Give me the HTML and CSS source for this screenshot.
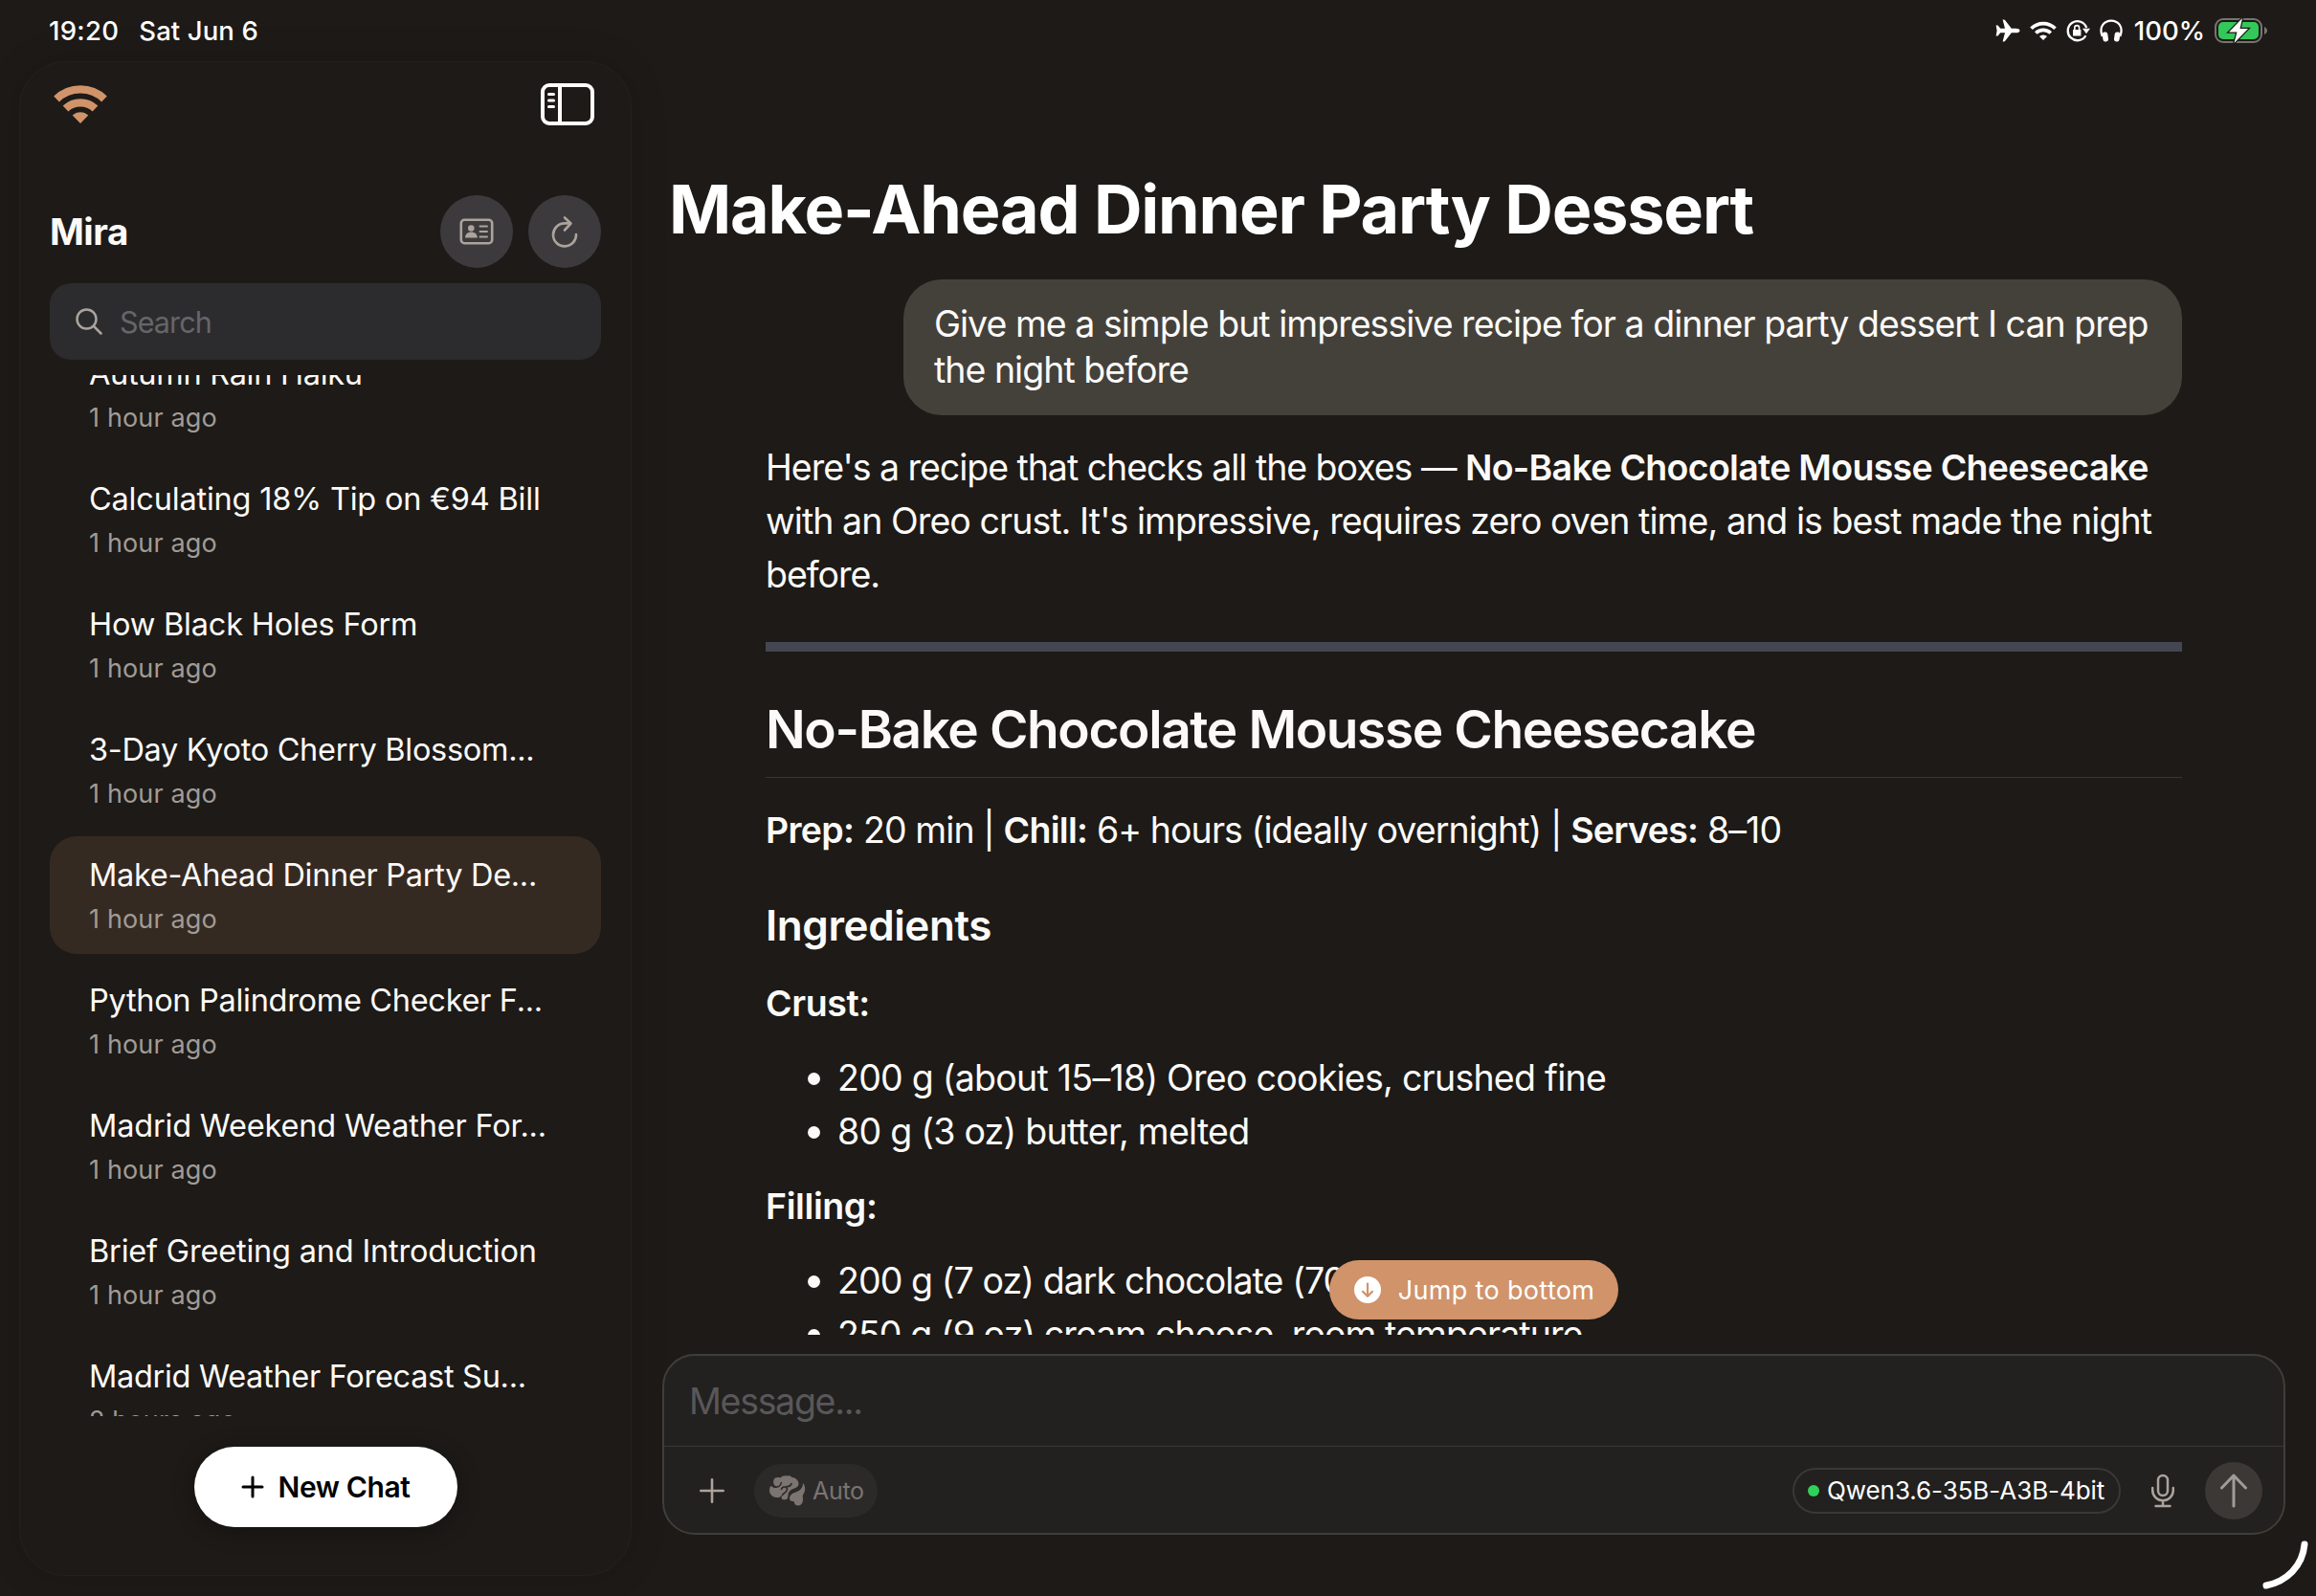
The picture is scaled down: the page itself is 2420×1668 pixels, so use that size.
FILE: index.html
```html
<!DOCTYPE html>
<html lang="en">
<head>
<meta charset="utf-8">
<title>Mira</title>
<link rel="stylesheet" href="styles.css">
</head>
<body>
<div class="screen">
  <header class="status">
    <span class="time">19:20</span><span class="date">Sat Jun 6</span>
    <div class="indicators">
      <svg width="26" height="24" viewBox="0 0 26 24"><path fill="#fff" d="M25.500 12c0-1.500-1.800-2.300-4-2.300h-4.700L10.200 1.200C9.700.5 9 .3 7.600.6L10 9.700H5.200L2.600 6.600H.6L1.600 12 .6 17.400h2l2.600-3.100H10L7.600 23.400c1.400.3 2.100.1 2.600-.6l6.600-8.500h4.700c2.200 0 4-.8 4-2.300z"/></svg>
      <svg width="28" height="20" viewBox="0 0 56 40"><g fill="none" stroke="#fff" stroke-width="7.500"><path d="M3 15.500a36 36 0 0 1 50 0"/><path d="M12.500 25a22.500 22.500 0 0 1 31 0"/></g><path fill="#fff" d="M28 40l-8-8a11.500 11.500 0 0 1 16 0z"/></svg>
      <svg width="25" height="24" viewBox="0 0 25 24"><path fill="none" stroke="#fff" stroke-width="2.300" d="M20.400 17.200A10 10 0 1 1 21.200 9"/><path fill="#fff" d="M17 9.800h8l-4 5.400zM7 11h8.400v6.400H7z"/><path fill="none" stroke="#fff" stroke-width="1.600" d="M8.800 11V9a2.400 2.400 0 0 1 4.800 0v2"/></svg>
      <svg width="24" height="24" viewBox="0 0 24 24"><path fill="none" stroke="#fff" stroke-width="2.300" d="M2.800 18c-4.500-11 3-16.400 9.200-16.400S25.700 7 21.200 18"/><rect x="3" y="13.500" width="5.600" height="10" rx="2.600" fill="#fff" transform="rotate(-8 6 18)"/><rect x="15.400" y="13.500" width="5.600" height="10" rx="2.600" fill="#fff" transform="rotate(8 18 18)"/></svg>
      <span class="percent">100%</span>
      <svg width="56" height="28" viewBox="0 0 56 28"><rect x="1" y="2" width="48" height="24" rx="8" fill="none" stroke="#777572" stroke-width="2"/><rect x="4" y="5" width="42" height="18" rx="5" fill="#34c759"/><path fill="#777572" d="M52 10c4 1.500 4 6.500 0 8z"/><path fill="#fff" stroke="#1d1a17" stroke-width="2.500" paint-order="stroke" d="M29 1L15 15.500h8.500L20.500 27 35 12h-8.500z"/></svg>
    </div>
  </header>

  <div class="body">
    <aside class="sidebar">
      <div class="toolbar">
        <svg width="56" height="41" viewBox="0 0 56 41"><g fill="none" stroke="#d0936a" stroke-width="8.200"><path d="M3 15.500a36 36 0 0 1 50 0"/><path d="M12.500 25.500a22.500 22.500 0 0 1 31 0"/></g><path fill="#d0936a" d="M28 41l-8.300-8.500a12 12 0 0 1 16.600 0z"/></svg>
        <svg width="58" height="46" viewBox="0 0 58 46"><g fill="none" stroke="#fff" stroke-width="4"><rect x="3" y="3" width="52" height="40" rx="7"/><path d="M21 3v40"/></g><path stroke="#fff" stroke-width="3" stroke-linecap="round" d="M9.500 12.500h5M9.500 19h5M9.500 25.500h5"/></svg>
      </div>
      <div class="brand">
        <h1 class="brand-name">Mira</h1>
        <button class="round"><svg width="36" height="28" viewBox="0 0 36 28"><rect x="1.800" y="1.800" width="32.400" height="24.400" rx="3.500" fill="none" stroke="#aca39c" stroke-width="2.600"/><circle cx="12.300" cy="10.500" r="3.300" fill="#aca39c"/><path fill="#aca39c" d="M6 20.500c0-8 12.800-8 12.800 0z"/><path stroke="#aca39c" stroke-width="2" stroke-linecap="round" d="M21.500 8.500h7.500M21.500 14h7.500M21.500 19.500h7.500"/></svg></button>
        <button class="round"><svg width="28" height="34" viewBox="0 0 28 34"><g fill="none" stroke="#aca39c" stroke-width="2.600" stroke-linecap="round" stroke-linejoin="round"><path d="M19.500 8.400H14A12 12 0 1 0 26 20"/><path d="M14 2.500l6.500 6L14 15.500"/></g></svg></button>
      </div>
      <div class="search">
        <svg width="28" height="28" viewBox="0 0 28 28"><g fill="none" stroke="#aca39c" stroke-width="2.500" stroke-linecap="round"><circle cx="11.500" cy="11.500" r="10"/><path d="M19 19l7.500 7.500"/></g></svg>
        <span class="search-text">Search</span>
      </div>
      <div class="list">
        <div class="list-inner">
          <div class="chat"><span class="t">Autumn Rain Haiku</span><span class="s">1 hour ago</span></div>
          <div class="chat"><span class="t wide">Calculating 18% Tip on €94 Bill</span><span class="s">1 hour ago</span></div>
          <div class="chat"><span class="t wide">How Black Holes Form</span><span class="s">1 hour ago</span></div>
          <div class="chat"><span class="t">3-Day Kyoto Cherry Blossom...</span><span class="s">1 hour ago</span></div>
          <div class="chat selected"><span class="t">Make-Ahead Dinner Party De...</span><span class="s">1 hour ago</span></div>
          <div class="chat"><span class="t">Python Palindrome Checker F...</span><span class="s">1 hour ago</span></div>
          <div class="chat"><span class="t wide">Madrid Weekend Weather For...</span><span class="s">1 hour ago</span></div>
          <div class="chat"><span class="t wide">Brief Greeting and Introduction</span><span class="s">1 hour ago</span></div>
          <div class="chat"><span class="t">Madrid Weather Forecast Su...</span><span class="s">2 hours ago</span></div>
        </div>
      </div>
      <button class="new-chat"><svg width="24" height="24" viewBox="0 0 24 24"><path stroke="#000" stroke-width="3" stroke-linecap="round" d="M12 2v20M2 12h20"/></svg><span class="new-text">New Chat</span></button>
    </aside>

    <main class="main">
      <div class="thread">
        <h1 class="title"><span>Make-Ahead Dinner Party Dessert</span></h1>
        <div class="bubble"><span>Give me a simple but impressive recipe for a dinner party dessert I can prep</span><br><span>the night before</span></div>
        <article class="answer">
          <p class="intro"><span>Here's a recipe that checks all the boxes — <b>No-Bake Chocolate Mousse Cheesecake</b></span><br><span class="line2">with an Oreo crust. It's impressive, requires zero oven time, and is best made the night</span><br><span>before.</span></p>
          <hr class="rule">
          <h2 class="h2"><span>No-Bake Chocolate Mousse Cheesecake</span></h2>
          <p class="meta"><span><b>Prep:</b> 20 min | <b>Chill:</b> 6+ hours (ideally overnight) | <b>Serves:</b> 8–10</span></p>
          <h3 class="h3"><span>Ingredients</span></h3>
          <p class="part"><b>Crust:</b></p>
          <ul class="items">
            <li><span>200 g (about 15–18) Oreo cookies, crushed fine</span></li>
            <li><span>80 g (3 oz) butter, melted</span></li>
          </ul>
          <p class="part"><b>Filling:</b></p>
          <ul class="items">
            <li><span class="tight">200 g (7 oz) dark chocolate (70%)</span></li>
            <li><span class="tight">250 g (9 oz) cream cheese, room temperature</span></li>
          </ul>
        </article>
        <button class="jump"><svg width="28" height="28" viewBox="0 0 28 28"><circle cx="14" cy="14" r="14" fill="#fff"/><path fill="none" stroke="#d0936a" stroke-width="2.200" stroke-linecap="round" stroke-linejoin="round" d="M14 7.500v13M9 15.800l5 5 5-5"/></svg><span class="jump-text">Jump to bottom</span></button>
      </div>
      <div class="composer">
        <div class="input"><span>Message...</span></div>
        <div class="actions">
          <svg width="26" height="26" viewBox="0 0 26 26"><path stroke="#aca39c" stroke-width="2.600" stroke-linecap="round" d="M13 1.300v23.400M1.300 13h23.400"/></svg>
          <span class="auto"><svg width="38" height="32" viewBox="0 0 38 32"><path fill="#7b7471" d="M4.500 5C5 2 8 1.500 11.500 2.500 13 .5 16 0 18.500.5c2-.5 4 .3 5 1.500C27 2 30.500 5 30.500 8.500c0 3.500-3 4.500-5.500 5.500-4 1.500-5.500 4-5.500 7-.3 3-1 4.500-3 4.200-1.500.3-3.200 0-3.700-.7-.5-1.500.2-3 .7-4.500-1.500 2.500-4 3.500-6.500 3C3 22.500 0 19.500 0 15.500c0-2 .5-3.500 1.500-4.500 2 1.500 4.500 1.500 6.500.5-3.500-.3-4.500-4-3.500-6.500z"/><path fill="#7b7471" d="M35 8c2.500 2.500 3 8 .5 11.500-1 1.500-.8 2.500-.5 4.500.3 4-1.500 7.500-5 7.500-2.500 0-4-1.500-4.500-4.500-2.500.3-4.500-.7-4.500-2.500 0-4 3-6 6.500-7C32 16 35 13 35 8z"/><path fill="none" stroke="#2b2a29" stroke-width="1.500" stroke-linecap="round" d="M4.500 12c4 .8 7.500-.8 7.800-4.500M12.500 14.500c.8-3.500 6-3.500 6 0 0 2.500-3 3.500-5 6M18 11.500c2.500.2 4.500-1 5-3"/></svg><span class="auto-text">Auto</span></span>
          <span class="model"><i class="dot"></i><span class="model-text">Qwen3.6-35B-A3B-4bit</span></span>
          <svg class="mic" width="26" height="36" viewBox="0 0 26 36"><g fill="none" stroke="#aca39c" stroke-width="2.500" stroke-linecap="round"><rect x="8" y="2" width="10" height="21" rx="5"/><path d="M2.200 15v2.500a10.800 10.800 0 0 0 21.600 0V15M13 28.500V34M5.500 34h15"/></g></svg>
          <button class="send"><svg width="30" height="36" viewBox="0 0 30 36"><path fill="none" stroke="#a09c99" stroke-width="3" stroke-linecap="round" stroke-linejoin="round" d="M15 34V2M2.500 15L15 2l12.500 13"/></svg></button>
        </div>
      </div>
    </main>
  </div>
  <svg class="corner" width="56" height="56" viewBox="0 0 56 56"><path fill="none" stroke="#fff" stroke-width="7" stroke-linecap="round" d="M48 7C46 30 29 46 8 50"/></svg>
</div>
</body>
</html>
```

FILE: styles.css
```css
* { box-sizing: border-box; margin: 0; padding: 0; }
body { background: #1d1a17; color: #fcfaf8; font-family: Inter, "Liberation Sans", sans-serif; }
button { border: 0; font: inherit; color: inherit; display: flex; align-items: center; justify-content: center; }
svg { display: block; flex: none; }
b { font-weight: 600; letter-spacing: -.7px; }
span, b { white-space: nowrap; }
.screen { position: relative; width: 2420px; height: 1668px; overflow: hidden; display: flex; flex-direction: column; }

.status { height: 64px; padding: 0 50px 0 51px; display: flex; align-items: center; font-size: 27.500px; font-weight: 500; color: #fff; }
.time { letter-spacing: .3px; }
.date { margin-left: 21px; letter-spacing: .1px; }
.indicators { margin-left: auto; display: flex; align-items: center; gap: 10px; }
.percent { margin-left: 2px; }

.body { flex: 1; display: flex; min-height: 0; }
.sidebar { flex: none; width: 640px; height: 1583px; margin-left: 20px; padding: 0 31px; border: 1px solid #23211e; border-radius: 48px; display: flex; flex-direction: column; box-shadow: 0 0 40px rgba(0, 0, 0, .12); }
.toolbar { height: 139px; padding: 21px 6px 0 4px; display: flex; justify-content: space-between; align-items: flex-start; }
.toolbar svg:first-child { margin-top: 2px; }
.brand { height: 76px; display: flex; align-items: center; gap: 16px; }
.brand-name { flex: 1; font-size: 38.500px; font-weight: 700; letter-spacing: -.5px; }
.round { width: 76px; height: 76px; border-radius: 50%; background: #3d3a3d; }
.search { height: 80px; margin-top: 16px; border-radius: 22px; background: #2c2c2e; display: flex; align-items: center; padding-left: 27px; gap: 18px; }
.search-text { font-size: 30.500px; letter-spacing: -.9px; color: #66656a; }
.list { height: 1088px; margin-top: 16px; overflow: hidden; }
.list-inner { margin-top: -42px; display: flex; flex-direction: column; gap: 8px; }
.chat { height: 123px; border-radius: 28px; padding: 21px 40px 0 41px; display: flex; flex-direction: column; align-items: flex-start; }
.selected { background: #352a22; }
.t { font-size: 32.500px; line-height: 40px; letter-spacing: -.3px; }
.wide { letter-spacing: -.19px; }
.s { font-size: 27px; line-height: 32px; margin-top: 10px; letter-spacing: .15px; color: #a19b95; }
.new-chat { align-self: center; width: 275px; height: 84px; margin-top: 32px; border-radius: 42px; background: #fff; color: #000; gap: 15px; box-shadow: 0 4px 24px rgba(0, 0, 0, .3); }
.new-text { font-size: 30px; font-weight: 600; letter-spacing: -.4px; }

.main { flex: 1; min-width: 0; padding: 0 32px; display: flex; flex-direction: column; }
.thread { position: relative; height: 1331px; overflow: hidden; padding: 109px 108px 0; display: flex; flex-direction: column; }
.title { margin-left: -101px; font-size: 70px; line-height: 92px; font-weight: 700; letter-spacing: -1.150px; color: #fff; }
.bubble { align-self: flex-end; width: 1336px; height: 142px; margin-top: 27px; padding: 23px 32px; border-radius: 40px; background: #44413b; font-size: 37.500px; line-height: 48px; letter-spacing: -.98px; }
.answer { font-size: 37.500px; padding-top: 27px; }
.intro { line-height: 56px; letter-spacing: -1.030px; }
.line2 { letter-spacing: -.93px; }
.rule { border: 0; height: 10px; margin-top: 42px; background: #444751; }
.h2 { margin-top: 40px; height: 92px; border-bottom: 1px solid #36353a; font-size: 55px; line-height: 83px; font-weight: 600; letter-spacing: -1.400px; }
.meta { margin-top: 27px; line-height: 56px; letter-spacing: -.91px; }
.h3 { margin-top: 39px; font-size: 44px; line-height: 64px; font-weight: 600; letter-spacing: -.4px; }
.part { margin-top: 22px; line-height: 56px; }
.part b { letter-spacing: -.4px; }
.items { list-style: none; margin-top: 22px; line-height: 56px; letter-spacing: -.74px; }
.items li { display: flex; align-items: center; padding-left: 44px; gap: 18px; }
.items li::before { content: ""; width: 13px; height: 13px; border-radius: 50%; background: #fcfaf8; }
.tight { letter-spacing: -.92px; }
.jump { position: absolute; left: 697px; top: 1253px; width: 302px; height: 62px; border-radius: 31px; background: #d0936a; color: #fff; gap: 18px; padding-left: 1px; }
.jump-text { font-size: 27px; letter-spacing: .35px; }

.composer { width: 1696px; height: 189px; margin-top: 20px; border: 2px solid #403e3a; border-radius: 34px; background: #22211f; display: flex; flex-direction: column; }
.input { height: 95px; border-bottom: 1px solid #393734; padding-left: 26px; font-size: 37.500px; line-height: 95px; letter-spacing: -1.300px; color: #59575a; }
.actions { flex: 1; display: flex; align-items: center; padding: 1px 22px 0 37px; }
.auto { width: 129px; height: 56px; margin-left: 31px; border-radius: 28px; background: #2b2a29; display: flex; align-items: center; padding-left: 16px; gap: 7px; color: #7b7471; font-size: 25px; letter-spacing: -.3px; }
.model { margin-left: auto; width: 343px; height: 48px; border: 2px solid #3a3835; border-radius: 24px; display: flex; align-items: center; padding-left: 14px; gap: 8px; color: #fff; font-size: 26px; letter-spacing: -.08px; }
.dot { width: 12px; height: 12px; border-radius: 50%; background: #30d158; }
.mic { margin: 0 31px; }
.send { width: 60px; height: 60px; border-radius: 50%; background: #3c3835; }
.corner { position: absolute; left: 2360px; top: 1607px; }
```
